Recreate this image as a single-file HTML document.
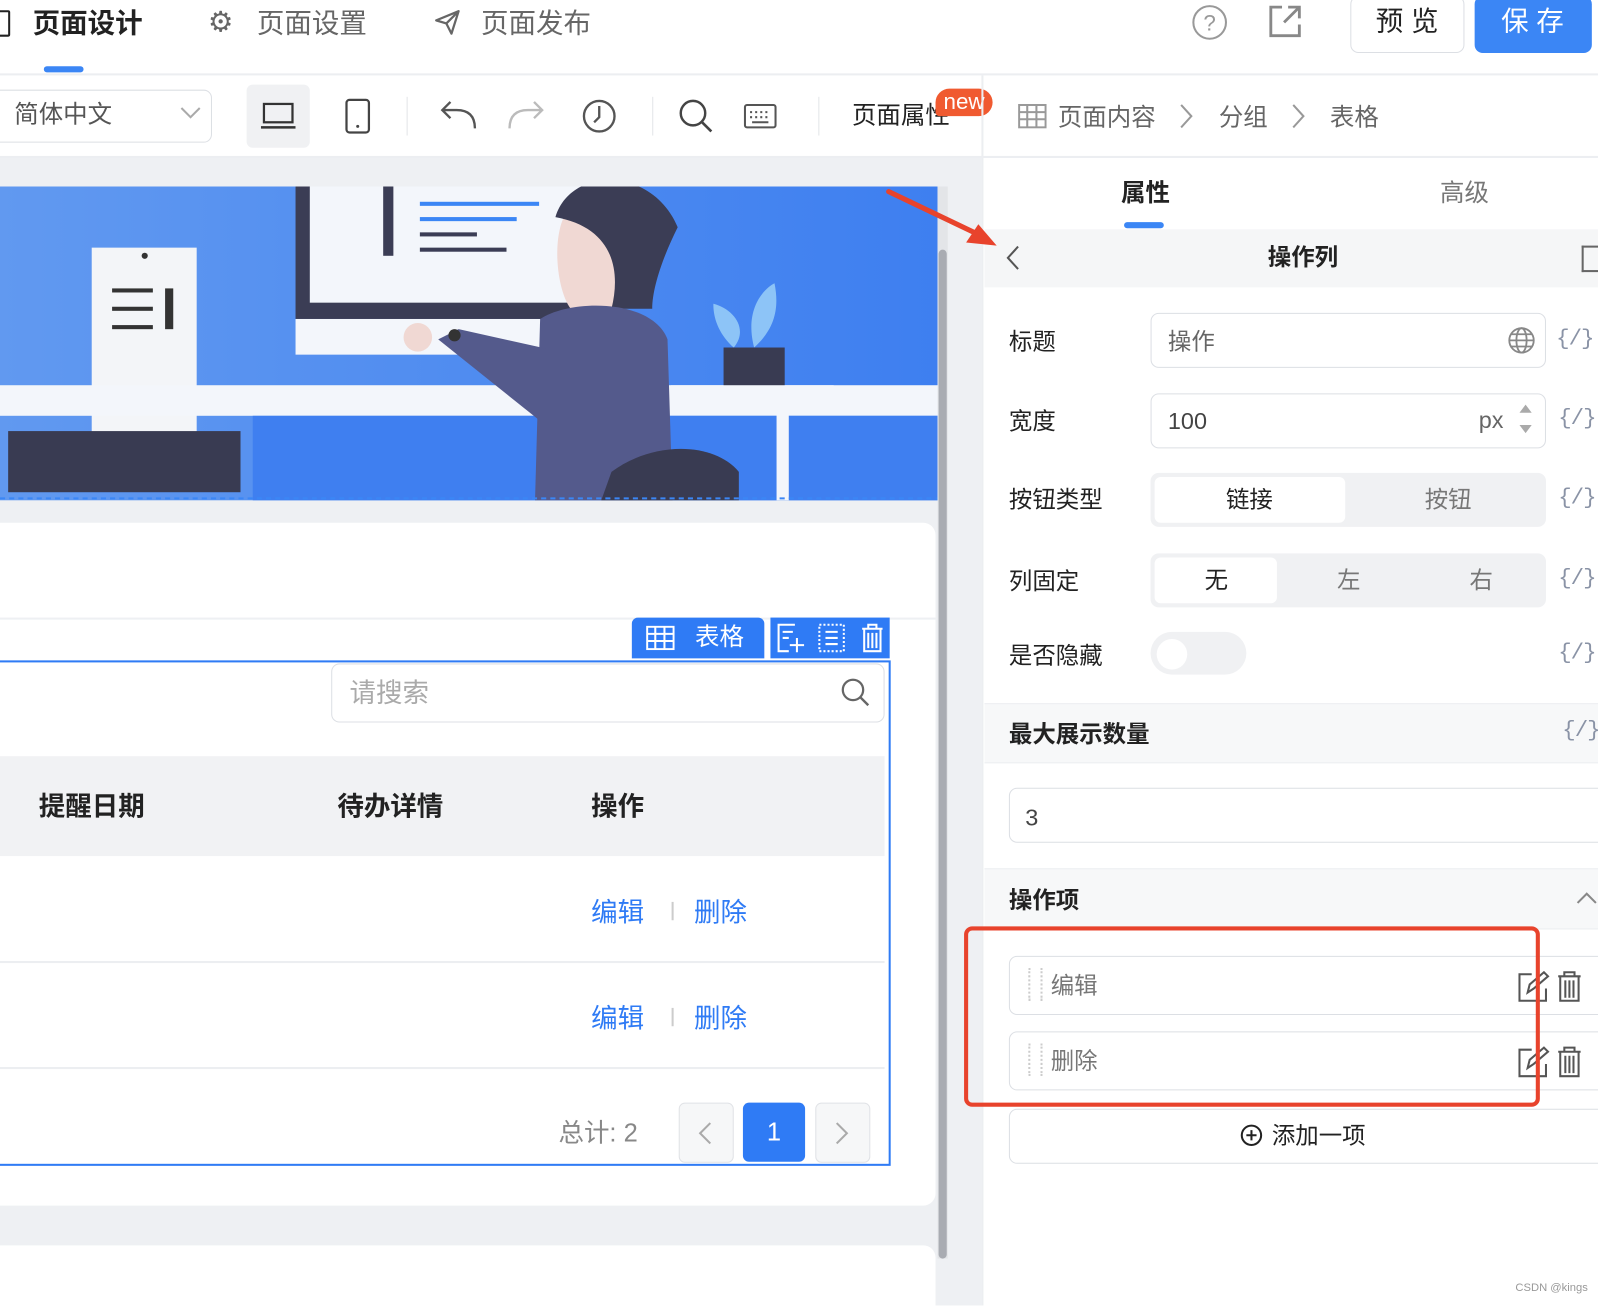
<!DOCTYPE html>
<html><head><meta charset="utf-8"><style>
html,body{margin:0;padding:0;width:1598px;height:1306px;overflow:hidden;background:#fff}
#w{position:absolute;left:0;top:0;width:1568px;height:1281px;transform:scale(1.0191);transform-origin:0 0;font-family:"Liberation Sans","Noto Sans CJK SC",sans-serif;color:#222}
.a{position:absolute}
.t{position:absolute;white-space:nowrap;line-height:1}
.br{color:#8a93a6;font-size:22px;letter-spacing:-1px;font-family:"Liberation Mono",monospace}
</style></head><body><div id="w">
<!-- top bar -->
<div class="a" style="left:0;top:0;width:1568px;height:72px;background:#fff;border-bottom:2px solid #eceef1"></div>
<div class="a" style="left:-8px;top:10px;width:14px;height:22px;border:2.5px solid #222;border-radius:2px"></div>
<div class="t" style="left:32px;top:10px;font-size:27px;font-weight:bold">页面设计</div>
<div class="a" style="left:43px;top:65px;width:39px;height:6px;border-radius:3px;background:#3b86f5"></div>
<div class="t" style="left:204px;top:8px;font-size:28px;color:#666">⚙</div>
<div class="t" style="left:252px;top:10px;font-size:27px;color:#666">页面设置</div>
<svg class="a" style="left:425px;top:8px" width="28" height="28" viewBox="0 0 28 28"><path d="M3 12 L25 3 L18 25 L13 15 Z M13 15 L25 3" fill="none" stroke="#666" stroke-width="2.2" stroke-linejoin="round"/></svg>
<div class="t" style="left:472px;top:10px;font-size:27px;color:#666">页面发布</div>
<div class="a" style="left:1170px;top:5px;width:30px;height:30px;border:2.5px solid #999;border-radius:50%;text-align:center;font-size:22px;line-height:31px;color:#999">?</div>
<svg class="a" style="left:1244px;top:4px" width="34" height="34" viewBox="0 0 34 34"><path d="M14 3 H3 V31 H31 V20 M20 3 H31 V14 M31 3 L16 18" fill="none" stroke="#888" stroke-width="2.8"/></svg>
<div class="a" style="left:1325px;top:-4px;width:110px;height:54px;border:1.5px solid #dcdfe4;border-radius:8px;background:#fff"></div>
<div class="t" style="left:1350px;top:8px;font-size:27px">预 览</div>
<div class="a" style="left:1447px;top:-4px;width:115px;height:56px;border-radius:8px;background:#3b86f5"></div>
<div class="t" style="left:1473px;top:8px;font-size:27px;color:#fff">保 存</div>
<!-- toolbar -->
<div class="a" style="left:-10px;top:88px;width:216px;height:50px;border:1.5px solid #dcdfe4;border-radius:8px"></div>
<div class="t" style="left:14px;top:101px;font-size:24px;color:#555">简体中文</div>
<svg class="a" style="left:176px;top:104px" width="22" height="14"><path d="M2 2 L11 11 L20 2" fill="none" stroke="#aaa" stroke-width="2"/></svg>
<div class="a" style="left:242px;top:83px;width:62px;height:62px;background:#f0f1f3;border-radius:6px"></div>
<svg class="a" style="left:256px;top:100px" width="34" height="28"><rect x="3" y="2" width="28" height="18" fill="none" stroke="#333" stroke-width="2.2"/><path d="M0 25 H34" stroke="#333" stroke-width="2.5"/></svg>
<svg class="a" style="left:338px;top:96px" width="26" height="36"><rect x="2" y="2" width="22" height="32" rx="3" fill="none" stroke="#444" stroke-width="2.2"/><circle cx="13" cy="28" r="1.5" fill="#444"/></svg>
<div class="a" style="left:399px;top:95px;width:1px;height:38px;background:#e3e5e8"></div>
<svg class="a" style="left:430px;top:98px" width="38" height="30"><path d="M36 28 C36 14 28 10 18 10 H4 M12 2 L4 10 L12 18" fill="none" stroke="#555" stroke-width="2.3"/></svg>
<svg class="a" style="left:498px;top:98px" width="38" height="30"><path d="M2 28 C2 14 10 10 20 10 H34 M26 2 L34 10 L26 18" fill="none" stroke="#bbb" stroke-width="2.3"/></svg>
<svg class="a" style="left:570px;top:96px" width="36" height="36"><circle cx="18" cy="18" r="15" fill="none" stroke="#555" stroke-width="2.3"/><path d="M18 8 V19 L13 24" fill="none" stroke="#555" stroke-width="2.3"/></svg>
<div class="a" style="left:640px;top:95px;width:1px;height:38px;background:#e3e5e8"></div>
<svg class="a" style="left:665px;top:96px" width="36" height="36"><circle cx="15" cy="15" r="12" fill="none" stroke="#444" stroke-width="2.4"/><path d="M24 24 L33 33" stroke="#444" stroke-width="2.6"/></svg>
<svg class="a" style="left:729px;top:101px" width="34" height="26"><rect x="2" y="2" width="30" height="22" rx="2" fill="none" stroke="#555" stroke-width="2"/><path d="M7 9h2M12 9h2M17 9h2M22 9h2M7 14h2M12 14h2M17 14h2M22 14h2M9 19h16" stroke="#555" stroke-width="2"/></svg>
<div class="a" style="left:803px;top:95px;width:1px;height:38px;background:#e3e5e8"></div>
<div class="t" style="left:836px;top:102px;font-size:24px">页面属性</div>
<div class="a" style="left:918px;top:87px;width:56px;height:27px;border-radius:14px 14px 14px 4px;background:#f05a30;color:#fff;font-size:22px;text-align:center;line-height:26px">new</div>
<div class="a" style="left:963px;top:74px;width:2px;height:1207px;background:#eceef1"></div>
<svg class="a" style="left:999px;top:102px" width="28" height="24"><rect x="1" y="1" width="26" height="22" fill="none" stroke="#999" stroke-width="2"/><path d="M1 8H27M1 15H27M9 1V23M18 1V23" stroke="#999" stroke-width="2"/></svg>
<div class="t" style="left:1038px;top:104px;font-size:24px;color:#666">页面内容</div>
<svg class="a" style="left:1156px;top:101px" width="16" height="26"><path d="M3 2 L13 13 L3 24" fill="none" stroke="#999" stroke-width="2"/></svg>
<div class="t" style="left:1196px;top:104px;font-size:24px;color:#666">分组</div>
<svg class="a" style="left:1266px;top:101px" width="16" height="26"><path d="M3 2 L13 13 L3 24" fill="none" stroke="#999" stroke-width="2"/></svg>
<div class="t" style="left:1305px;top:104px;font-size:24px;color:#666">表格</div>
<div class="a" style="left:0;top:153px;width:1568px;height:2px;background:#eceef1"></div>
<!-- canvas -->
<div class="a" style="left:0;top:155px;width:963px;height:1126px;background:#eef0f3"></div>
<svg class="a" style="left:0;top:183px" width="920" height="308" viewBox="0 0 920 308">
<defs><linearGradient id="g" x1="0" x2="1"><stop offset="0" stop-color="#6199f0"/><stop offset="1" stop-color="#3e7ff0"/></linearGradient></defs>
<rect width="920" height="308" fill="url(#g)"/>
<rect x="290" y="0" width="310" height="130" fill="#3b3d55"/><rect x="304" y="0" width="282" height="114" fill="#f3f6fb"/>
<rect x="376" y="0" width="10" height="68" fill="#3b3d55"/><rect x="412" y="15" width="117" height="4" fill="#3b86f5"/><rect x="412" y="30" width="95" height="4" fill="#3b86f5"/><rect x="412" y="45" width="56" height="4" fill="#3b3d55"/><rect x="412" y="60" width="85" height="4" fill="#3b3d55"/>
<rect x="290" y="130" width="300" height="35" fill="#f3f6fb"/>
<rect x="90" y="60" width="103" height="200" fill="#f3f5f8"/><circle cx="142" cy="68" r="3" fill="#333"/><rect x="110" y="100" width="40" height="4" fill="#333"/><rect x="110" y="118" width="40" height="4" fill="#333"/><rect x="110" y="136" width="40" height="4" fill="#333"/><rect x="162" y="100" width="8" height="40" fill="#333"/>
<rect x="0" y="195" width="920" height="30" fill="#f3f6fb"/>
<rect x="8" y="240" width="228" height="60" fill="#393b52"/>
<rect x="248" y="225" width="672" height="83" fill="#3f7ff0"/>
<path d="M560 20 C540 40 545 100 560 120 L600 120 L630 40 Z" fill="#f0d8d3"/>
<path d="M545 30 C560 -20 640 -20 665 40 C650 70 640 100 640 120 L600 120 C610 80 600 40 545 30 Z" fill="#3b3d55"/>
<path d="M530 130 C560 110 640 110 655 150 L660 308 L525 308 Z" fill="#545a8c"/>
<path d="M430 150 L530 230 L540 160 L450 140 Z" fill="#545a8c"/><circle cx="410" cy="148" r="14" fill="#f0d8d3"/><circle cx="446" cy="146" r="6" fill="#333"/>
<path d="M600 280 C640 250 700 250 725 280 L725 308 L590 308 Z" fill="#393b52"/>
<rect x="710" y="158" width="60" height="40" fill="#393b52"/><path d="M740 158 C730 120 750 100 760 95 C765 120 760 140 740 158 Z M720 158 C700 140 700 120 700 115 C720 120 735 140 720 158Z" fill="#8dc4f7"/>
<rect x="658" y="195" width="160" height="28" fill="#f3f6fb"/><rect x="762" y="223" width="12" height="85" fill="#f3f6fb"/>
<path d="M0 306 H920" stroke="#3b86f5" stroke-width="2" stroke-dasharray="5 4"/>
</svg>
<div class="a" style="left:920px;top:183px;width:10px;height:1052px;background:#e3e5e8"></div>
<div class="a" style="left:921px;top:245px;width:8px;height:990px;background:#a9acb2;border-radius:4px"></div>
<div class="a" style="left:0;top:513px;width:918px;height:670px;background:#fff;border-radius:0 12px 12px 0"></div>
<div class="a" style="left:0;top:606px;width:918px;height:2px;background:#eef0f3"></div>
<div class="a" style="left:0;top:1222px;width:918px;height:60px;background:#fff;border-radius:0 12px 0 0"></div>
<div class="a" style="left:620px;top:606px;width:130px;height:40px;background:#2f7bf5;border-radius:6px 6px 0 0"></div>
<svg class="a" style="left:634px;top:614px" width="28" height="24"><rect x="1" y="1" width="26" height="22" fill="none" stroke="#fff" stroke-width="2"/><path d="M1 8H27M1 15H27M9 1V23M18 1V23" stroke="#fff" stroke-width="2"/></svg>
<div class="t" style="left:682px;top:614px;font-size:24px;color:#fff">表格</div>
<div class="a" style="left:756px;top:606px;width:117px;height:40px;background:#2f7bf5"></div>
<svg class="a" style="left:760px;top:610px" width="110" height="32" fill="none" stroke="#fff" stroke-width="2"><path d="M20 3H4V29H14M8 10H18M8 16H14M22 16V30M15 23H29"/><rect x="44" y="3" width="24" height="26" stroke-dasharray="2 2"/><path d="M50 10H62M50 16H62M50 22H62"/><path d="M86 7H106M92 7V3H100V7M88 7V29H104V7M92 11V26M96 11V26M100 11V26"/></svg>
<div class="a" style="left:-4px;top:648px;width:874px;height:492px;border:2px solid #2f7bf5"></div>
<div class="a" style="left:325px;top:651px;width:541px;height:56px;border:1.5px solid #dcdfe4;border-radius:8px"></div>
<div class="t" style="left:343px;top:667px;font-size:26px;color:#aaa">请搜索</div>
<svg class="a" style="left:825px;top:665px" width="30" height="30"><circle cx="12" cy="12" r="10" fill="none" stroke="#666" stroke-width="2.2"/><path d="M19 19 L27 27" stroke="#666" stroke-width="2.4"/></svg>
<div class="a" style="left:0;top:742px;width:868px;height:98px;background:#f1f2f4"></div>
<div class="t" style="left:38px;top:778px;font-size:26px;font-weight:bold">提醒日期</div>
<div class="t" style="left:331px;top:778px;font-size:26px;font-weight:bold">待办详情</div>
<div class="t" style="left:580px;top:778px;font-size:26px;font-weight:bold">操作</div>
<div class="a" style="left:0;top:943px;width:868px;height:1.5px;background:#eceef1"></div>
<div class="a" style="left:0;top:1047px;width:868px;height:1.5px;background:#eceef1"></div>
<div class="t" style="left:580px;top:882px;font-size:26px;color:#2f7bf5">编辑</div>
<div class="a" style="left:659px;top:885px;width:1.5px;height:18px;background:#ccc"></div>
<div class="t" style="left:681px;top:882px;font-size:26px;color:#2f7bf5">删除</div>
<div class="t" style="left:580px;top:986px;font-size:26px;color:#2f7bf5">编辑</div>
<div class="a" style="left:659px;top:989px;width:1.5px;height:18px;background:#ccc"></div>
<div class="t" style="left:681px;top:986px;font-size:26px;color:#2f7bf5">删除</div>
<div class="t" style="left:548px;top:1100px;font-size:25px;color:#888">总计: 2</div>
<div class="a" style="left:666px;top:1082px;width:52px;height:57px;border:1.5px solid #e0e2e6;border-radius:6px;background:#f6f7f8"></div>
<svg class="a" style="left:684px;top:1100px" width="16" height="24"><path d="M13 2 L3 12 L13 22" fill="none" stroke="#aaa" stroke-width="2"/></svg>
<div class="a" style="left:729px;top:1082px;width:61px;height:58px;border-radius:6px;background:#2f7bf5;color:#fff;font-size:25px;text-align:center;line-height:58px">1</div>
<div class="a" style="left:800px;top:1082px;width:52px;height:57px;border:1.5px solid #e0e2e6;border-radius:6px;background:#f6f7f8"></div>
<svg class="a" style="left:818px;top:1100px" width="16" height="24"><path d="M3 2 L13 12 L3 22" fill="none" stroke="#aaa" stroke-width="2"/></svg>
<!-- right panel -->
<div class="t" style="left:1100px;top:178px;font-size:24px;font-weight:bold">属性</div>
<div class="a" style="left:1103px;top:218px;width:39px;height:6px;border-radius:3px;background:#3b86f5"></div>
<div class="t" style="left:1413px;top:178px;font-size:24px;color:#777">高级</div>
<div class="a" style="left:966px;top:225px;width:602px;height:57px;background:#f5f6f7"></div>
<svg class="a" style="left:986px;top:240px" width="16" height="26"><path d="M13 2 L3 13 L13 24" fill="none" stroke="#555" stroke-width="2"/></svg>
<div class="t" style="left:1244px;top:241px;font-size:23px;font-weight:bold">操作列</div>
<div class="a" style="left:1552px;top:241px;width:16px;height:22px;border:2px solid #666;border-right:none"></div>
<div class="t" style="left:990px;top:324px;font-size:23px">标题</div>
<div class="a" style="left:1129px;top:307px;width:386px;height:52px;border:1.5px solid #dcdfe4;border-radius:8px"></div>
<div class="t" style="left:1146px;top:324px;font-size:23px;color:#666">操作</div>
<svg class="a" style="left:1479px;top:320px" width="28" height="28" fill="none" stroke="#888" stroke-width="1.8"><circle cx="14" cy="14" r="12"/><ellipse cx="14" cy="14" rx="5" ry="12"/><path d="M2 14H26M4 8H24M4 20H24"/></svg>
<div class="t br" style="left:1527px;top:322px">{/}</div>
<div class="t" style="left:990px;top:402px;font-size:23px">宽度</div>
<div class="a" style="left:1129px;top:386px;width:386px;height:52px;border:1.5px solid #dcdfe4;border-radius:8px"></div>
<div class="t" style="left:1146px;top:402px;font-size:23px;color:#444">100</div>
<div class="t" style="left:1451px;top:401px;font-size:23px;color:#666">px</div>
<svg class="a" style="left:1489px;top:393px" width="16" height="36"><path d="M2 12 L8 4 L14 12Z M2 24 L8 32 L14 24Z" fill="#aaa"/></svg>
<div class="t br" style="left:1529px;top:400px">{/}</div>
<div class="t" style="left:990px;top:479px;font-size:23px">按钮类型</div>
<div class="a" style="left:1129px;top:464px;width:388px;height:53px;background:#f0f1f3;border-radius:8px"></div>
<div class="a" style="left:1133px;top:468px;width:187px;height:45px;background:#fff;border-radius:6px"></div>
<div class="t" style="left:1203px;top:479px;font-size:23px">链接</div>
<div class="t" style="left:1398px;top:479px;font-size:23px;color:#777">按钮</div>
<div class="t br" style="left:1529px;top:478px">{/}</div>
<div class="t" style="left:990px;top:559px;font-size:23px">列固定</div>
<div class="a" style="left:1129px;top:543px;width:388px;height:53px;background:#f0f1f3;border-radius:8px"></div>
<div class="a" style="left:1133px;top:547px;width:120px;height:45px;background:#fff;border-radius:6px"></div>
<div class="t" style="left:1182px;top:558px;font-size:23px">无</div>
<div class="t" style="left:1312px;top:558px;font-size:23px;color:#777">左</div>
<div class="t" style="left:1442px;top:558px;font-size:23px;color:#777">右</div>
<div class="t br" style="left:1529px;top:557px">{/}</div>
<div class="t" style="left:990px;top:632px;font-size:23px">是否隐藏</div>
<div class="a" style="left:1129px;top:620px;width:94px;height:42px;background:#f0f1f3;border-radius:21px"></div>
<div class="a" style="left:1135px;top:627px;width:30px;height:30px;background:#fff;border-radius:50%"></div>
<div class="t br" style="left:1529px;top:630px">{/}</div>
<div class="a" style="left:966px;top:690px;width:602px;height:57px;background:#f7f8f9;border-top:1.5px solid #eceef1;border-bottom:1.5px solid #eceef1"></div>
<div class="t" style="left:990px;top:709px;font-size:23px;font-weight:bold">最大展示数量</div>
<div class="t br" style="left:1533px;top:706px">{/}</div>
<div class="a" style="left:990px;top:773px;width:590px;height:52px;border:1.5px solid #dcdfe4;border-radius:8px"></div>
<div class="t" style="left:1006px;top:791px;font-size:23px;color:#444">3</div>
<div class="a" style="left:966px;top:852px;width:602px;height:58px;background:#f7f8f9;border-top:1.5px solid #eceef1;border-bottom:1.5px solid #eceef1"></div>
<div class="t" style="left:990px;top:872px;font-size:23px;font-weight:bold">操作项</div>
<svg class="a" style="left:1546px;top:874px" width="22" height="14"><path d="M2 12 L11 3 L20 12" fill="none" stroke="#888" stroke-width="2"/></svg>
<div class="a" style="left:990px;top:938px;width:590px;height:56px;border:1.5px solid #dcdfe4;border-radius:8px"></div>
<div class="a" style="left:990px;top:1012px;width:590px;height:56px;border:1.5px solid #dcdfe4;border-radius:8px"></div>
<div class="a" style="left:1009px;top:950px;width:10px;height:32px;border-left:2px dotted #ccc;border-right:2px dotted #ccc"></div>
<div class="a" style="left:1009px;top:1024px;width:10px;height:32px;border-left:2px dotted #ccc;border-right:2px dotted #ccc"></div>
<div class="t" style="left:1031px;top:956px;font-size:23px;color:#777">编辑</div>
<div class="t" style="left:1031px;top:1030px;font-size:23px;color:#777">删除</div>
<svg class="a" style="left:1489px;top:952px" width="64" height="32" fill="none" stroke="#555" stroke-width="2"><path d="M14 4H2V30H28V18M10 22 L12 14 L26 2 L30 6 L16 18Z"/><path d="M40 6H62M46 6V2H56V6M42 6V30H60V6M47 10V27M51 10V27M55 10V27"/></svg>
<svg class="a" style="left:1489px;top:1026px" width="64" height="32" fill="none" stroke="#555" stroke-width="2"><path d="M14 4H2V30H28V18M10 22 L12 14 L26 2 L30 6 L16 18Z"/><path d="M40 6H62M46 6V2H56V6M42 6V30H60V6M47 10V27M51 10V27M55 10V27"/></svg>
<div class="a" style="left:946px;top:909px;width:557px;height:169px;border:4px solid #e8432c;border-radius:8px"></div>
<div class="a" style="left:990px;top:1088px;width:590px;height:52px;border:1.5px solid #dcdfe4;border-radius:8px"></div>
<svg class="a" style="left:1217px;top:1103px" width="22" height="22"><circle cx="11" cy="11" r="9.5" fill="none" stroke="#222" stroke-width="2"/><path d="M11 6V16M6 11H16" stroke="#222" stroke-width="2"/></svg>
<div class="t" style="left:1248px;top:1103px;font-size:23px">添加一项</div>
<div class="t" style="left:1487px;top:1259px;font-size:11px;color:#999">CSDN @kings</div>
<!-- red arrow -->
<svg class="a" style="left:860px;top:180px" width="130" height="70"><path d="M12 8 L100 50" stroke="#e8432c" stroke-width="5" stroke-linecap="round"/><path d="M118 61 L88 58 L100 40 Z" fill="#e8432c"/></svg>
</div></body></html>
